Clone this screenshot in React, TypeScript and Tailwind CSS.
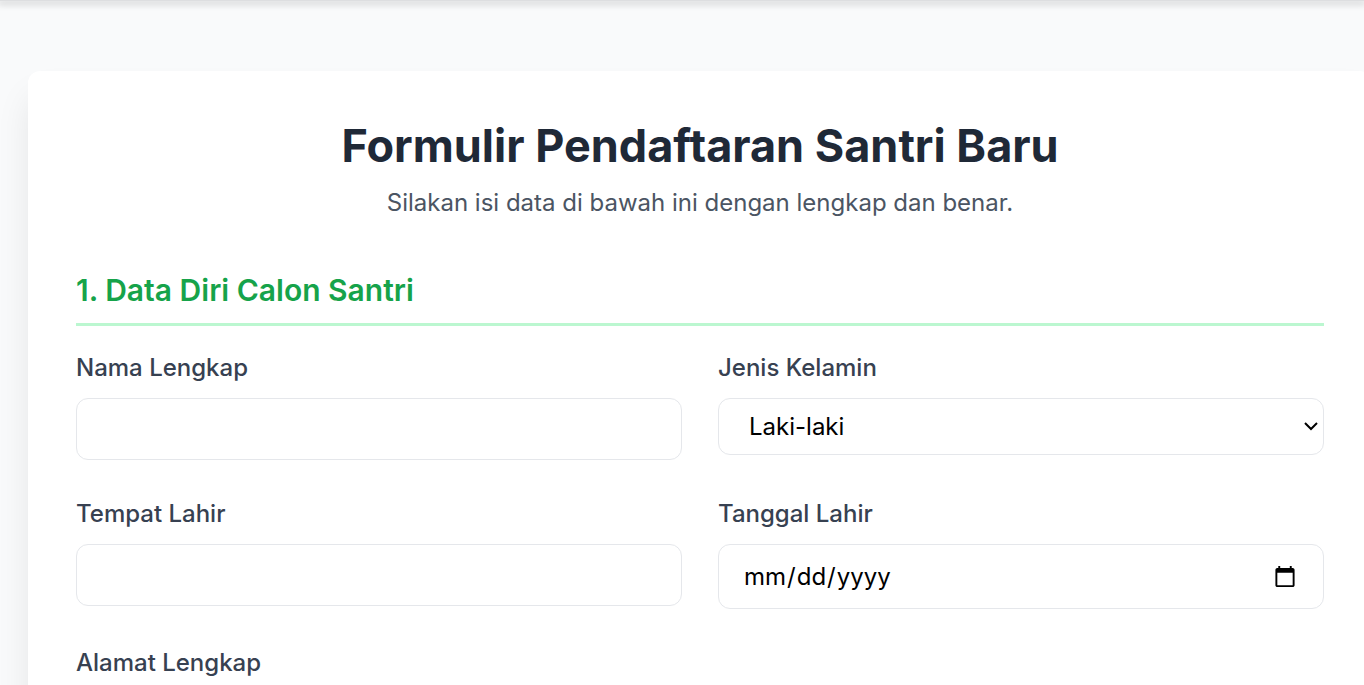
import type { ReactNode } from 'react';

interface FieldProps {
  id: string;
  label: string;
  className?: string;
  children: ReactNode;
}

const controlClass =
  'block w-full rounded-xl border border-gray-200 bg-white text-2xl leading-9 text-black outline-none focus:border-green-500';

function Field({ id, label, className = '', children }: FieldProps) {
  return (
    <div className={className}>
      <label htmlFor={id} className="mb-3 block text-2xl leading-9 font-medium text-[#374151]">
        {label}
      </label>
      {children}
    </div>
  );
}

export default function App() {
  return (
    <div className="min-h-screen overflow-hidden bg-[#f9fafb] font-['Inter',sans-serif]">
      {/* Navbar edge */}
      <header className="h-px bg-[#dddee0] shadow-[0_2px_6px_2px_rgba(0,0,0,0.14)]" />

      <main className="-mr-2 pt-[70px] pl-7">
        <div className="rounded-xl bg-white px-12 pt-12 pb-12 shadow-[0_24px_36px_-4px_rgba(0,0,0,0.1)]">
          <div className="mb-12 text-center">
            <h1 className="text-[45px] leading-[54px] font-bold text-[#1f2937]">
              Formulir Pendaftaran Santri Baru
            </h1>
            <p className="mt-3 text-2xl leading-9 text-[#4b5563]">
              Silakan isi data di bawah ini dengan lengkap dan benar.
            </p>
          </div>

          <form>
            <h2 className="mb-6 border-b-3 border-[#bbf7d0] pb-3 text-3xl leading-[42px] font-semibold text-[#16a34a]">
              1. Data Diri Calon Santri
            </h2>

            <div className="grid grid-cols-2 gap-9">
              <Field id="nama" label="Nama Lengkap">
                <input id="nama" type="text" className={`${controlClass} px-6 py-3`} />
              </Field>

              <Field id="kelamin" label="Jenis Kelamin">
                <div className="relative">
                  <select id="kelamin" className={`${controlClass} h-[57px] appearance-none px-[30px]`}>
                    <option>Laki-laki</option>
                    <option>Perempuan</option>
                  </select>
                  <svg
                    className="pointer-events-none absolute top-5 right-[5px] h-4 w-4"
                    viewBox="0 0 16 16"
                    fill="none"
                    stroke="black"
                    strokeWidth="2"
                  >
                    <path d="M2 5l6 6 6-6" />
                  </svg>
                </div>
              </Field>

              <Field id="tempat" label="Tempat Lahir">
                <input id="tempat" type="text" className={`${controlClass} px-6 py-3`} />
              </Field>

              <Field id="tanggal" label="Tanggal Lahir">
                <input id="tanggal" type="date" className={`${controlClass} h-[65px] px-6 py-3`} />
              </Field>

              <Field id="alamat" label="Alamat Lengkap" className="col-span-2">
                <textarea id="alamat" rows={3} className={`${controlClass} px-6 py-3`} />
              </Field>
            </div>
          </form>
        </div>
      </main>
    </div>
  );
}
